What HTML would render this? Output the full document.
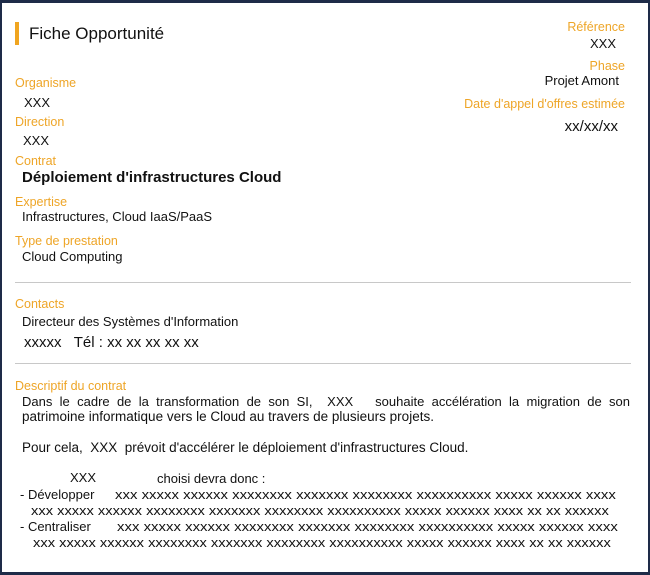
<!DOCTYPE html>
<html><head><meta charset="utf-8"><style>
*{margin:0;padding:0;box-sizing:border-box}
body{width:650px;height:575px;background:#fff;font-family:"Liberation Sans",sans-serif;color:#111;position:relative;overflow:hidden}
.frame{position:absolute;left:0;top:0;width:650px;height:575px;border:2px solid #1e2b48;border-top-width:3px;border-bottom-width:3px}
.a{position:absolute;white-space:nowrap;line-height:1}
.o{color:#eea527;font-size:12.5px}
.t{font-size:13px}
.r{text-align:right}
.x{font-size:13px;transform-origin:0 0}
.hr{position:absolute;left:15px;width:616px;height:1px;background:#c8c8c8}
</style></head><body>
<div class="frame"></div>
<div class="a" style="left:15px;top:22px;width:4px;height:23px;background:#f0a520"></div>
<div class="a" style="left:29px;top:25px;font-size:17px">Fiche Opportunité</div>

<div class="a o r" style="right:25px;top:21px">Référence</div>
<div class="a t" style="left:590px;top:37px">XXX</div>
<div class="a o r" style="right:25px;top:60px">Phase</div>
<div class="a t r" style="right:31px;top:74px">Projet Amont</div>
<div class="a o r" style="right:25px;top:98px">Date d'appel d'offres estimée</div>
<div class="a r" style="right:32px;top:119px;font-size:15px">xx/xx/xx</div>

<div class="a o" style="left:15px;top:77px">Organisme</div>
<div class="a t" style="left:24px;top:96px">XXX</div>
<div class="a o" style="left:15px;top:116px">Direction</div>
<div class="a t" style="left:23px;top:134px">XXX</div>
<div class="a o" style="left:15px;top:155px">Contrat</div>
<div class="a" style="left:22px;top:170px;font-size:15px;font-weight:bold">Déploiement d'infrastructures Cloud</div>
<div class="a o" style="left:15px;top:196px">Expertise</div>
<div class="a t" style="left:22px;top:210px">Infrastructures, Cloud IaaS/PaaS</div>
<div class="a o" style="left:15px;top:235px">Type de prestation</div>
<div class="a t" style="left:22px;top:250px">Cloud Computing</div>
<div class="hr" style="top:282px"></div>
<div class="a o" style="left:15px;top:298px">Contacts</div>
<div class="a t" style="left:22px;top:315px">Directeur des Systèmes d'Information</div>
<div class="a" style="left:24px;top:335px;font-size:15px">xxxxx&nbsp;&nbsp; Tél : xx xx xx xx xx</div>
<div class="hr" style="top:363px"></div>
<div class="a o" style="left:15px;top:380px">Descriptif du contrat</div>
<div class="a t" style="left:22px;top:395px;width:608px;text-align:justify;text-align-last:justify">Dans le cadre de la transformation de son SI, &nbsp;XXX &nbsp; souhaite accélération la migration de son</div>
<div class="a t" style="left:22px;top:410px;font-size:13.5px">patrimoine informatique vers le Cloud au travers de plusieurs projets.</div>
<div class="a t" style="left:22px;top:441px;font-size:13.5px">Pour cela, &nbsp;XXX &nbsp;prévoit d'accélérer le déploiement d'infrastructures Cloud.</div>
<div class="a t" style="left:70px;top:471px">XXX</div>
<div class="a t" style="left:157px;top:472px">choisi devra donc :</div>
<div class="a t" style="left:20px;top:488px">- Développer</div>
<div class="a x" style="left:115px;top:488px;transform:scaleX(1.15)">xxx xxxxx xxxxxx xxxxxxxx xxxxxxx xxxxxxxx xxxxxxxxxx xxxxx xxxxxx xxxx</div>
<div class="a x" style="left:31px;top:504px;transform:scaleX(1.13)">xxx xxxxx xxxxxx xxxxxxxx xxxxxxx xxxxxxxx xxxxxxxxxx xxxxx xxxxxx xxxx xx xx xxxxxx</div>
<div class="a t" style="left:20px;top:520px">- Centraliser</div>
<div class="a x" style="left:117px;top:520px;transform:scaleX(1.15)">xxx xxxxx xxxxxx xxxxxxxx xxxxxxx xxxxxxxx xxxxxxxxxx xxxxx xxxxxx xxxx</div>
<div class="a x" style="left:33px;top:536px;transform:scaleX(1.13)">xxx xxxxx xxxxxx xxxxxxxx xxxxxxx xxxxxxxx xxxxxxxxxx xxxxx xxxxxx xxxx xx xx xxxxxx</div>
</body></html>
